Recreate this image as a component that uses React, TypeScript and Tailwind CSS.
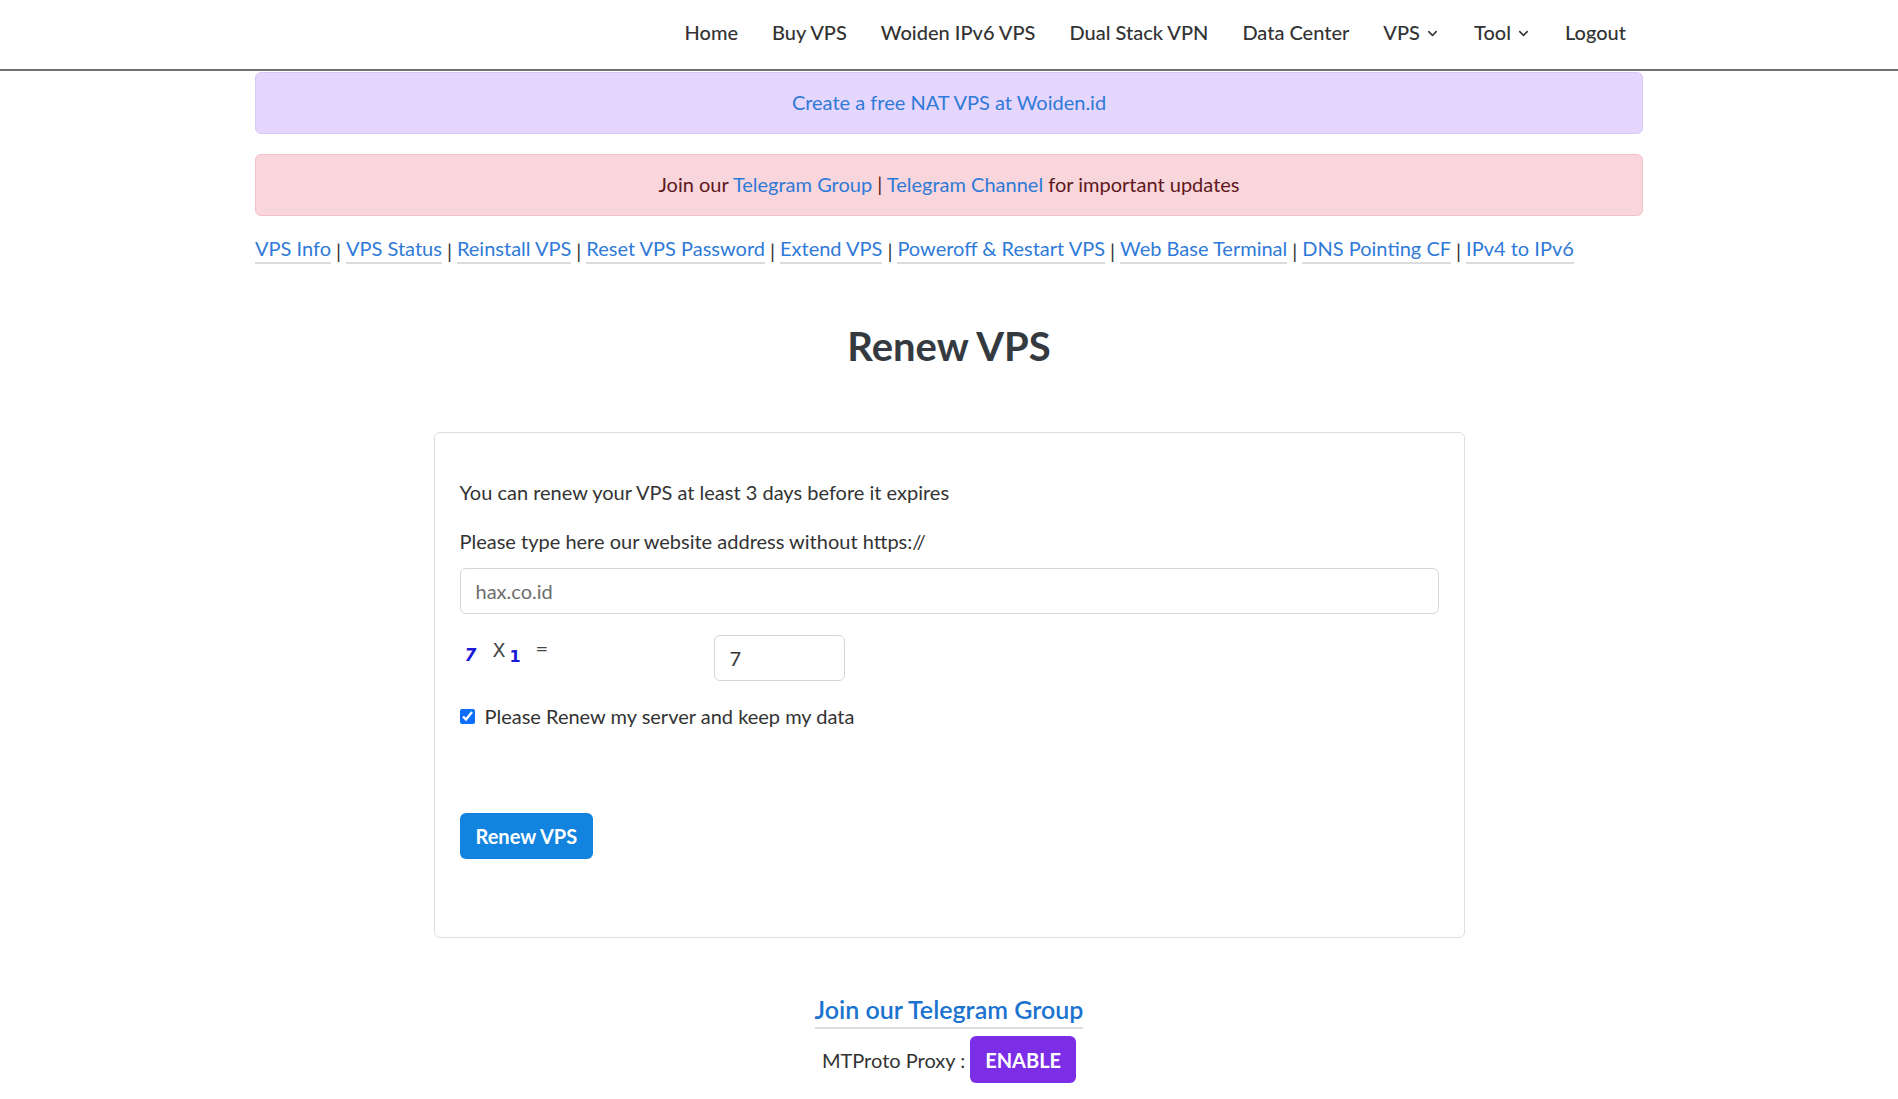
import { ChevronDown } from "lucide-react";

const navItems = [
  { label: "Home" },
  { label: "Buy VPS" },
  { label: "Woiden IPv6 VPS" },
  { label: "Dual Stack VPN" },
  { label: "Data Center" },
  { label: "VPS", dropdown: true },
  { label: "Tool", dropdown: true },
  { label: "Logout" },
];

const toolLinks = [
  "VPS Info",
  "VPS Status",
  "Reinstall VPS",
  "Reset VPS Password",
  "Extend VPS",
  "Poweroff & Restart VPS",
  "Web Base Terminal",
  "DNS Pointing CF",
  "IPv4 to IPv6",
];

const Navbar = () => {
  return (
    <nav className="h-[71px] border-b-2 border-[#707070] bg-white">
      <div className="w-[1388px] mx-auto h-full flex items-center justify-end">
        {navItems.map((item) => (
          <a
            key={item.label}
            href="#"
            className="flex items-center gap-[5px] px-[17px] text-[20px] font-medium text-[#333] pb-[5px]"
          >
            {item.label}
            {item.dropdown && <ChevronDown size={15} strokeWidth={2.4} className="mt-[2px]" />}
          </a>
        ))}
      </div>
    </nav>
  );
};

const RenewCard = () => {
  return (
    <div className="w-[1031px] mx-auto border border-[#dedede] rounded-md px-[25px] pt-[47px] pb-[78px] text-[20px] text-[#333]">
      <p className="leading-[24px]">You can renew your VPS at least 3 days before it expires</p>
      <p className="leading-[24px] mt-[25px]">Please type here our website address without https://</p>
      {/* alamat website */}
      <input
        type="text"
        placeholder="hax.co.id"
        className="mt-[15px] w-full h-[46px] border border-[#d6d6d6] rounded-md px-[15px] text-[20px] placeholder:text-[#6e6e6e] outline-none"
      />

      {/* captcha */}
      <div className="flex items-start mt-[21px]">
        <div className="w-[254px] h-[46px] relative font-['DejaVu_Sans',sans-serif]">
          <span className="absolute left-[5px] top-[11px] text-[#1a1ad6] italic font-semibold text-[17px] leading-[18px]">7</span>
          <span className="absolute left-[33px] top-[5px] text-[#444] text-[19px] leading-[20px]">X</span>
          <span className="absolute left-[50px] top-[14px] text-[#1a1ad6] font-bold text-[16px] leading-[16px]">1</span>
          <span className="absolute left-[76px] top-[5px] text-[#444] text-[15px] leading-[18px]">=</span>
        </div>
        <input
          type="text"
          defaultValue="7"
          className="w-[131px] h-[46px] border border-[#d6d6d6] rounded-md px-[15px] text-[20px] outline-none"
        />
      </div>

      <label className="flex items-center gap-[10px] mt-[23px]">
        <input type="checkbox" defaultChecked className="w-[15px] h-[15px] accent-[#0d6efd]" />
        <span className="leading-[24px]">Please Renew my server and keep my data</span>
      </label>

      <button className="mt-[85px] h-[46px] px-[16px] rounded-md bg-[#1283de] text-white text-[20px] font-bold">
        Renew VPS
      </button>
    </div>
  );
};

export default function App() {
  return (
    <div className="min-h-screen bg-white font-['Lato',sans-serif] text-[#333]">
      <Navbar />
      <div className="w-[1388px] mx-auto">
        <div className="mt-[1px] h-[62px] rounded-md border border-[#d7c8f6] bg-[#e4d6fc] flex items-center justify-center text-[20px] pb-[2px]">
          <a href="#" className="text-[#2f7ad8]">Create a free NAT VPS at Woiden.id</a>
        </div>
        <div className="mt-[20px] h-[62px] rounded-md border border-[#f3c2c7] bg-[#f8d6db] flex items-center justify-center text-[20px] text-[#5e1820] pb-[2px]">
          <span>
            Join our <a href="#" className="text-[#2f7ad8]">Telegram Group</a> |{" "}
            <a href="#" className="text-[#2f7ad8]">Telegram Channel</a> for important updates
          </span>
        </div>

        <div className="mt-[20px] flex items-start text-[20px] text-[#2f7ad8]">
          {toolLinks.map((l, i) => (
            <span key={l} className="flex items-start">
              {i > 0 && <span className="text-[#333] mx-[5px]">|</span>}
              <a href="#" className="border-b-2 border-[#dcdcdc] pb-[2px] leading-[24px]">{l}</a>
            </span>
          ))}
        </div>

        <h1 className="mt-[56px] text-center text-[40px] font-bold text-[#343a40] leading-[48px]">Renew VPS</h1>
      </div>

      <div className="mt-[62px]">
        <RenewCard />
      </div>

      <div className="mt-[55px] flex flex-col items-center">
        <a href="#" className="text-[25px] font-semibold text-[#1b73cf] border-b-2 border-[#dcdcdc] leading-[32px] pb-[2px]">
          Join our Telegram Group
        </a>
        <div className="mt-[7px] flex items-center gap-[5px] text-[20px] text-[#333]">
          <span>MTProto Proxy :</span>
          <button className="h-[47px] px-[15px] rounded-md bg-[#7b2ee6] text-white font-bold text-[20px]">ENABLE</button>
        </div>
      </div>
    </div>
  );
}
